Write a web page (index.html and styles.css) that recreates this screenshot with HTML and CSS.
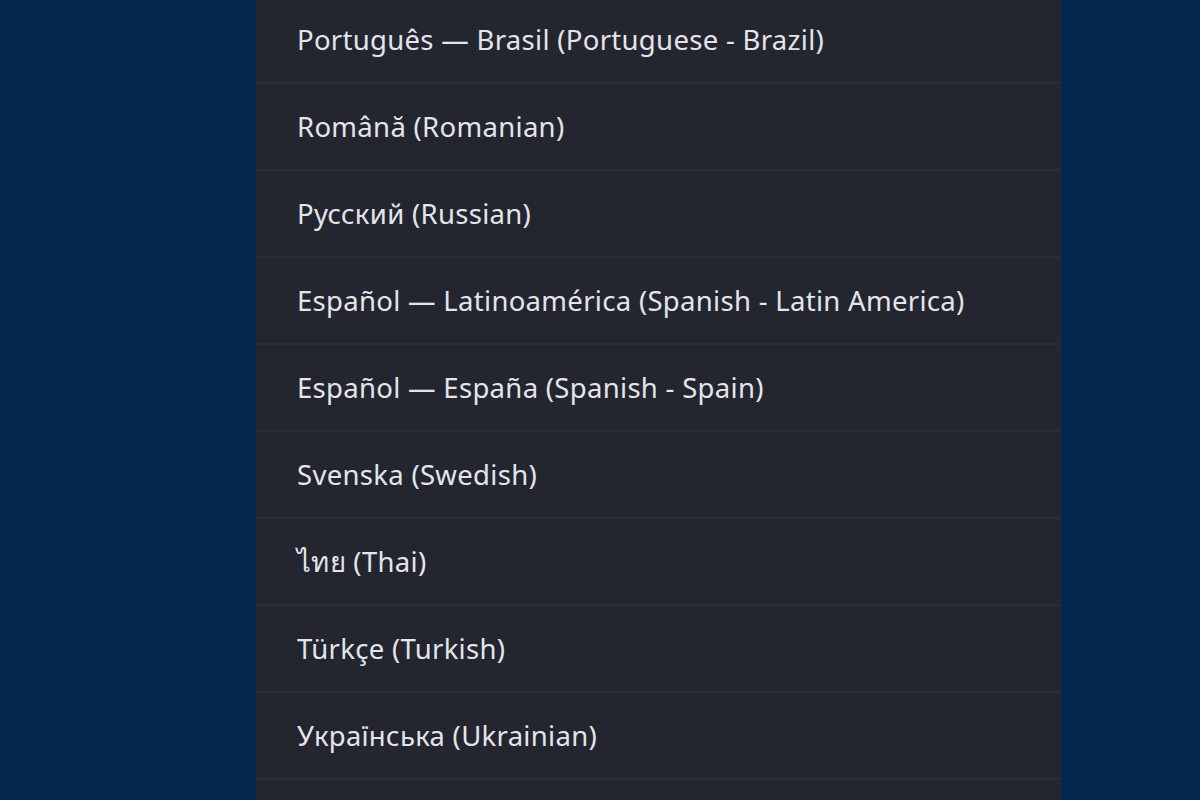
FILE: index.html
```html
<!DOCTYPE html>
<html lang="en">
<head>
  <meta charset="UTF-8">
  <meta name="viewport" content="width=device-width, initial-scale=1.0">
  <title>Language</title>
  <link rel="stylesheet" href="styles.css">
</head>
<body>
  <div class="page">
    <div class="panel">
      <ul class="lang-list">
        <li class="lang-item">Português — Brasil (Portuguese - Brazil)</li>
        <li class="lang-item">Română (Romanian)</li>
        <li class="lang-item">Русский (Russian)</li>
        <li class="lang-item">Español — Latinoamérica (Spanish - Latin America)</li>
        <li class="lang-item">Español — España (Spanish - Spain)</li>
        <li class="lang-item">Svenska (Swedish)</li>
        <li class="lang-item">ไทย (Thai)</li>
        <li class="lang-item">Türkçe (Turkish)</li>
        <li class="lang-item">Українська (Ukrainian)</li>
        <li class="lang-item"></li>
      </ul>
    </div>
  </div>
</body>
</html>
```

FILE: styles.css
```css
* {
  margin: 0;
  padding: 0;
  box-sizing: border-box;
}

html, body {
  height: 100%;
  overflow: hidden;
}

body {
  font-family: "Noto Sans", "Open Sans", "DejaVu Sans", sans-serif;
  background: #04274f;
  color: #e4e5ea;
}

.page {
  height: 100%;
  padding-left: 256px;
}

.panel {
  width: 804px;
  height: 100%;
  background: #23252f;
  overflow: hidden;
  box-shadow: 1px 0 0 #2b2530;
}

/* list is scrolled a few pixels down */
.lang-list {
  list-style: none;
  margin-top: -3px;
}

.lang-item {
  height: 87px;
  display: flex;
  align-items: center;
  padding-left: 41px;
  font-size: 27.5px;
  letter-spacing: 0.3px;
  border-bottom: 2px solid #2a2c36;
  white-space: nowrap;
}
```
